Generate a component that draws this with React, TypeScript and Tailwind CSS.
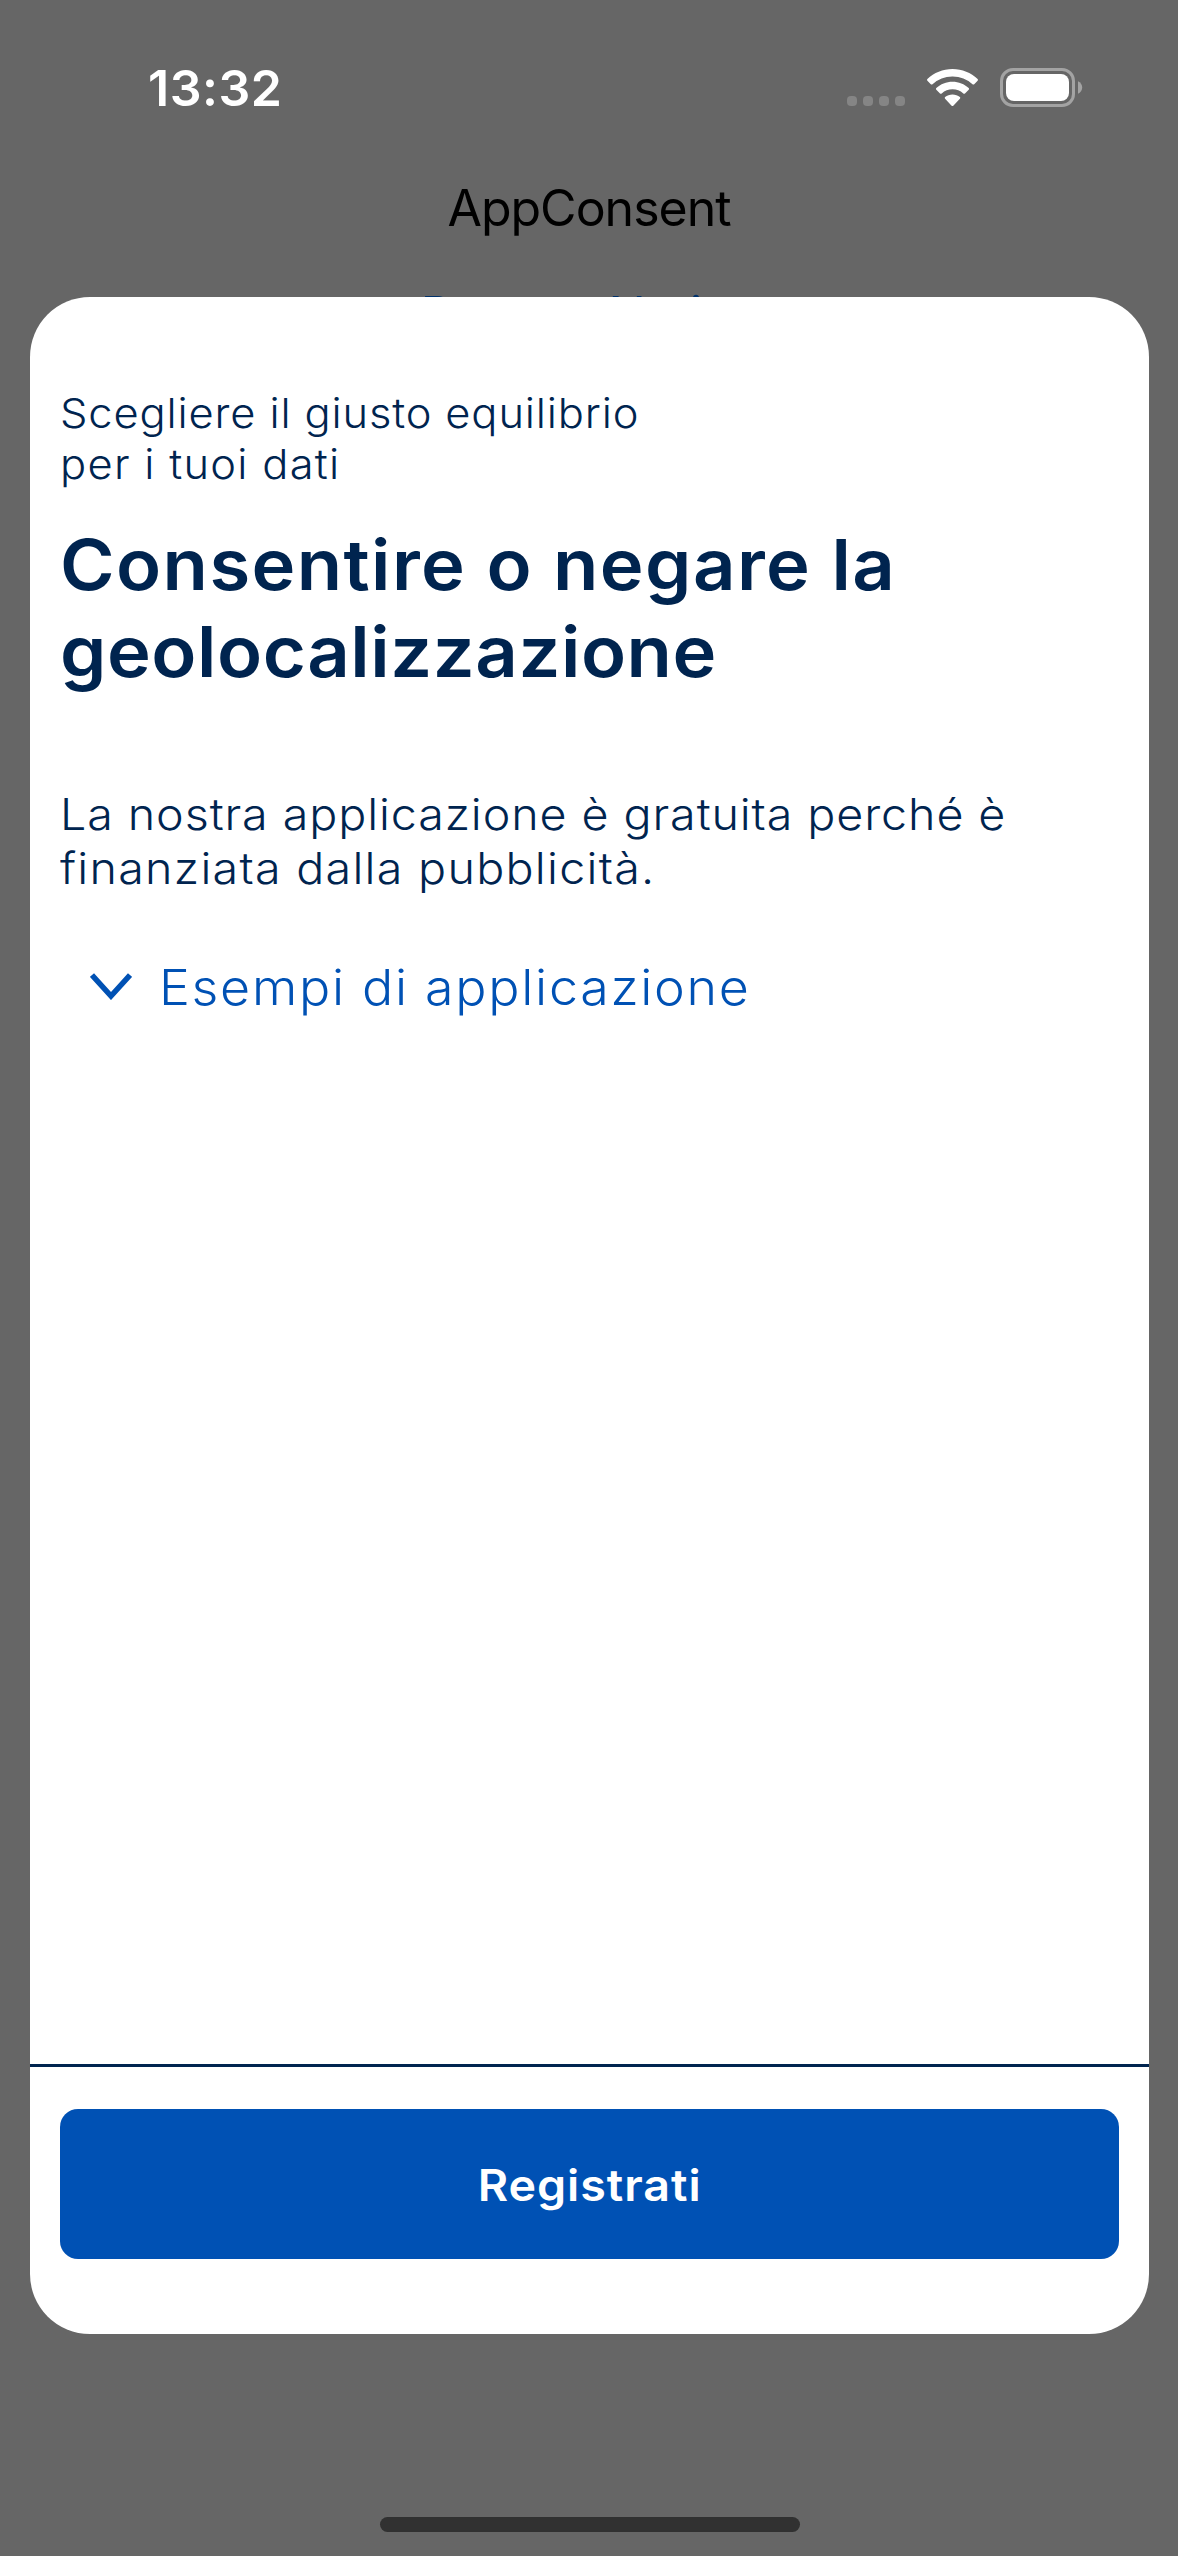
import React from 'react';

const content = {
  time: '13:32',
  appTitle: 'AppConsent',
  backgroundLink: 'Present Notice',
  subtitle: ['Scegliere il giusto equilibrio', 'per i tuoi dati'],
  title: ['Consentire o negare la', 'geolocalizzazione'],
  body: ['La nostra applicazione è gratuita perché è', 'finanziata dalla pubblicità.'],
  examples: 'Esempi di applicazione',
  action: 'Registrati',
};

const WifiIcon: React.FC = () => (
  <svg className="w-[51px] h-[38px]" viewBox="0 0 51 38" fill="white" aria-hidden="true">
    <path d="M25.5 0C35.2 0 44 3.8 50.6 10c.5.5.5 1.2 0 1.7L47.2 15.2c-.5.5-1.2.5-1.7 0A29.3 29.3 0 0 0 25.5 7.5 29.3 29.3 0 0 0 5.5 15.2c-.5.5-1.2.5-1.7 0L.4 11.7c-.5-.5-.5-1.2 0-1.7C7 3.8 15.8 0 25.5 0Z" />
    <path d="M25.5 12.7c6.2 0 11.9 2.4 16.2 6.3.5.5.5 1.2 0 1.7l-3.7 3.7c-.5.5-1.2.5-1.7 0a16 16 0 0 0-21.6 0c-.5.5-1.2.5-1.7 0l-3.7-3.7c-.5-.5-.5-1.2 0-1.7 4.3-3.9 10-6.3 16.2-6.3Z" />
    <path d="M25.5 25.5c2.8 0 5.4 1 7.4 2.6.5.5.5 1.2 0 1.7l-6.6 6.9c-.5.5-1.2.5-1.7 0L18.1 29.8c-.5-.5-.5-1.2 0-1.7 2-1.6 4.6-2.6 7.4-2.6Z" />
  </svg>
);

const BatteryIcon: React.FC = () => (
  <svg className="w-[83px] h-[39px]" viewBox="0 0 83 39" aria-hidden="true">
    <rect x="1.5" y="1.5" width="72" height="36" rx="11.5" fill="none" stroke="#a3a3a3" strokeWidth="3" />
    <rect x="6" y="6" width="63" height="27" rx="8" fill="white" />
    <path d="M78 13.2c2.5 1 4.2 3.4 4.2 6.3s-1.7 5.3-4.2 6.3Z" fill="#a3a3a3" />
  </svg>
);

const StatusBar: React.FC = () => (
  <div className="flex h-[176px] items-start justify-between pl-[148px] pr-[95px]">
    <span className="mt-[58px] text-[50px] leading-[60px] font-semibold tracking-[0.5px] text-white">{content.time}</span>
    <div className="mt-[68px] flex items-start">
      <div className="mt-7 flex gap-1.5">
        {[0, 1, 2, 3].map((dot) => (
          <span key={dot} className="size-2.5 rounded-[4px] bg-[#858585]" />
        ))}
      </div>
      <div className="mt-px ml-[22px]"><WifiIcon /></div>
      <div className="ml-[22px]"><BatteryIcon /></div>
    </div>
  </div>
);

const App: React.FC = () => {
  return (
    <div className="flex h-[2556px] w-[1178px] flex-col overflow-hidden bg-[#666666] font-['Inter',sans-serif]">
      <StatusBar />

      {/* Screen behind the dialog */}
      <div className="flex h-[121px] flex-col items-center">
        <h1 className="mt-[2px] shrink-0 text-[50px] leading-[60px] tracking-[-1px] text-black">{content.appTitle}</h1>
        <span className="mt-[46px] shrink-0 text-[49.5px] leading-[60px] tracking-[-0.6px] text-[#00316b]">{content.backgroundLink}</span>
      </div>

      {/* Consent dialog */}
      <section className="relative mr-[29px] ml-[30px] flex h-[2037px] flex-col rounded-[60px] bg-white text-[#00244f]" aria-labelledby="consent-title">
        <div className="flex grow flex-col px-[30px] pt-[91px]">
          <p className="origin-left scale-x-106 text-[41px] leading-[51px] font-[350] whitespace-nowrap">
            <span className="block tracking-[0.8px]">{content.subtitle[0]}</span>
            <span className="block tracking-[1.2px]">{content.subtitle[1]}</span>
          </p>
          <h2 id="consent-title" className="mt-[31px] origin-left scale-x-106 text-[70px] leading-[87px] font-semibold whitespace-nowrap">
            <span className="block tracking-[1.3px]">{content.title[0]}</span>
            <span className="block tracking-[0.5px]">{content.title[1]}</span>
          </h2>
          <p className="mt-[92px] origin-left scale-x-106 text-[44px] leading-[54px] font-[350] whitespace-nowrap">
            <span className="block tracking-[0.85px]">{content.body[0]}</span>
            <span className="block tracking-[1.2px]">{content.body[1]}</span>
          </p>
          <button className="mt-[63px] ml-[30px] flex items-center text-left text-[#0051b4]">
            <svg className="mb-1 h-[27px] w-[42px]" viewBox="0 0 42 27" fill="none" aria-hidden="true">
              <path d="M2 2 21 23 40 2" stroke="currentColor" strokeWidth="5.5" />
            </svg>
            <span className="ml-[27px] origin-left scale-x-106 text-[49px] leading-[60px] font-[350] whitespace-nowrap tracking-[1.6px]">{content.examples}</span>
          </button>
        </div>
        <div className="flex h-[270px] flex-col border-t-[3px] border-[#00244f] px-[30px] pt-[42px]">
          <button className="h-[150px] rounded-[18px] bg-[#0051b4] pt-0.5 text-[44px] leading-[54px] font-semibold text-white">
            <span className="inline-block scale-x-106 tracking-[0.9px]">{content.action}</span>
          </button>
        </div>
      </section>

      {/* Home indicator */}
      <div className="mt-[183px] ml-[380px] h-[15px] w-[420px] rounded-full bg-[#313131]" />
    </div>
  );
};

export default App;
